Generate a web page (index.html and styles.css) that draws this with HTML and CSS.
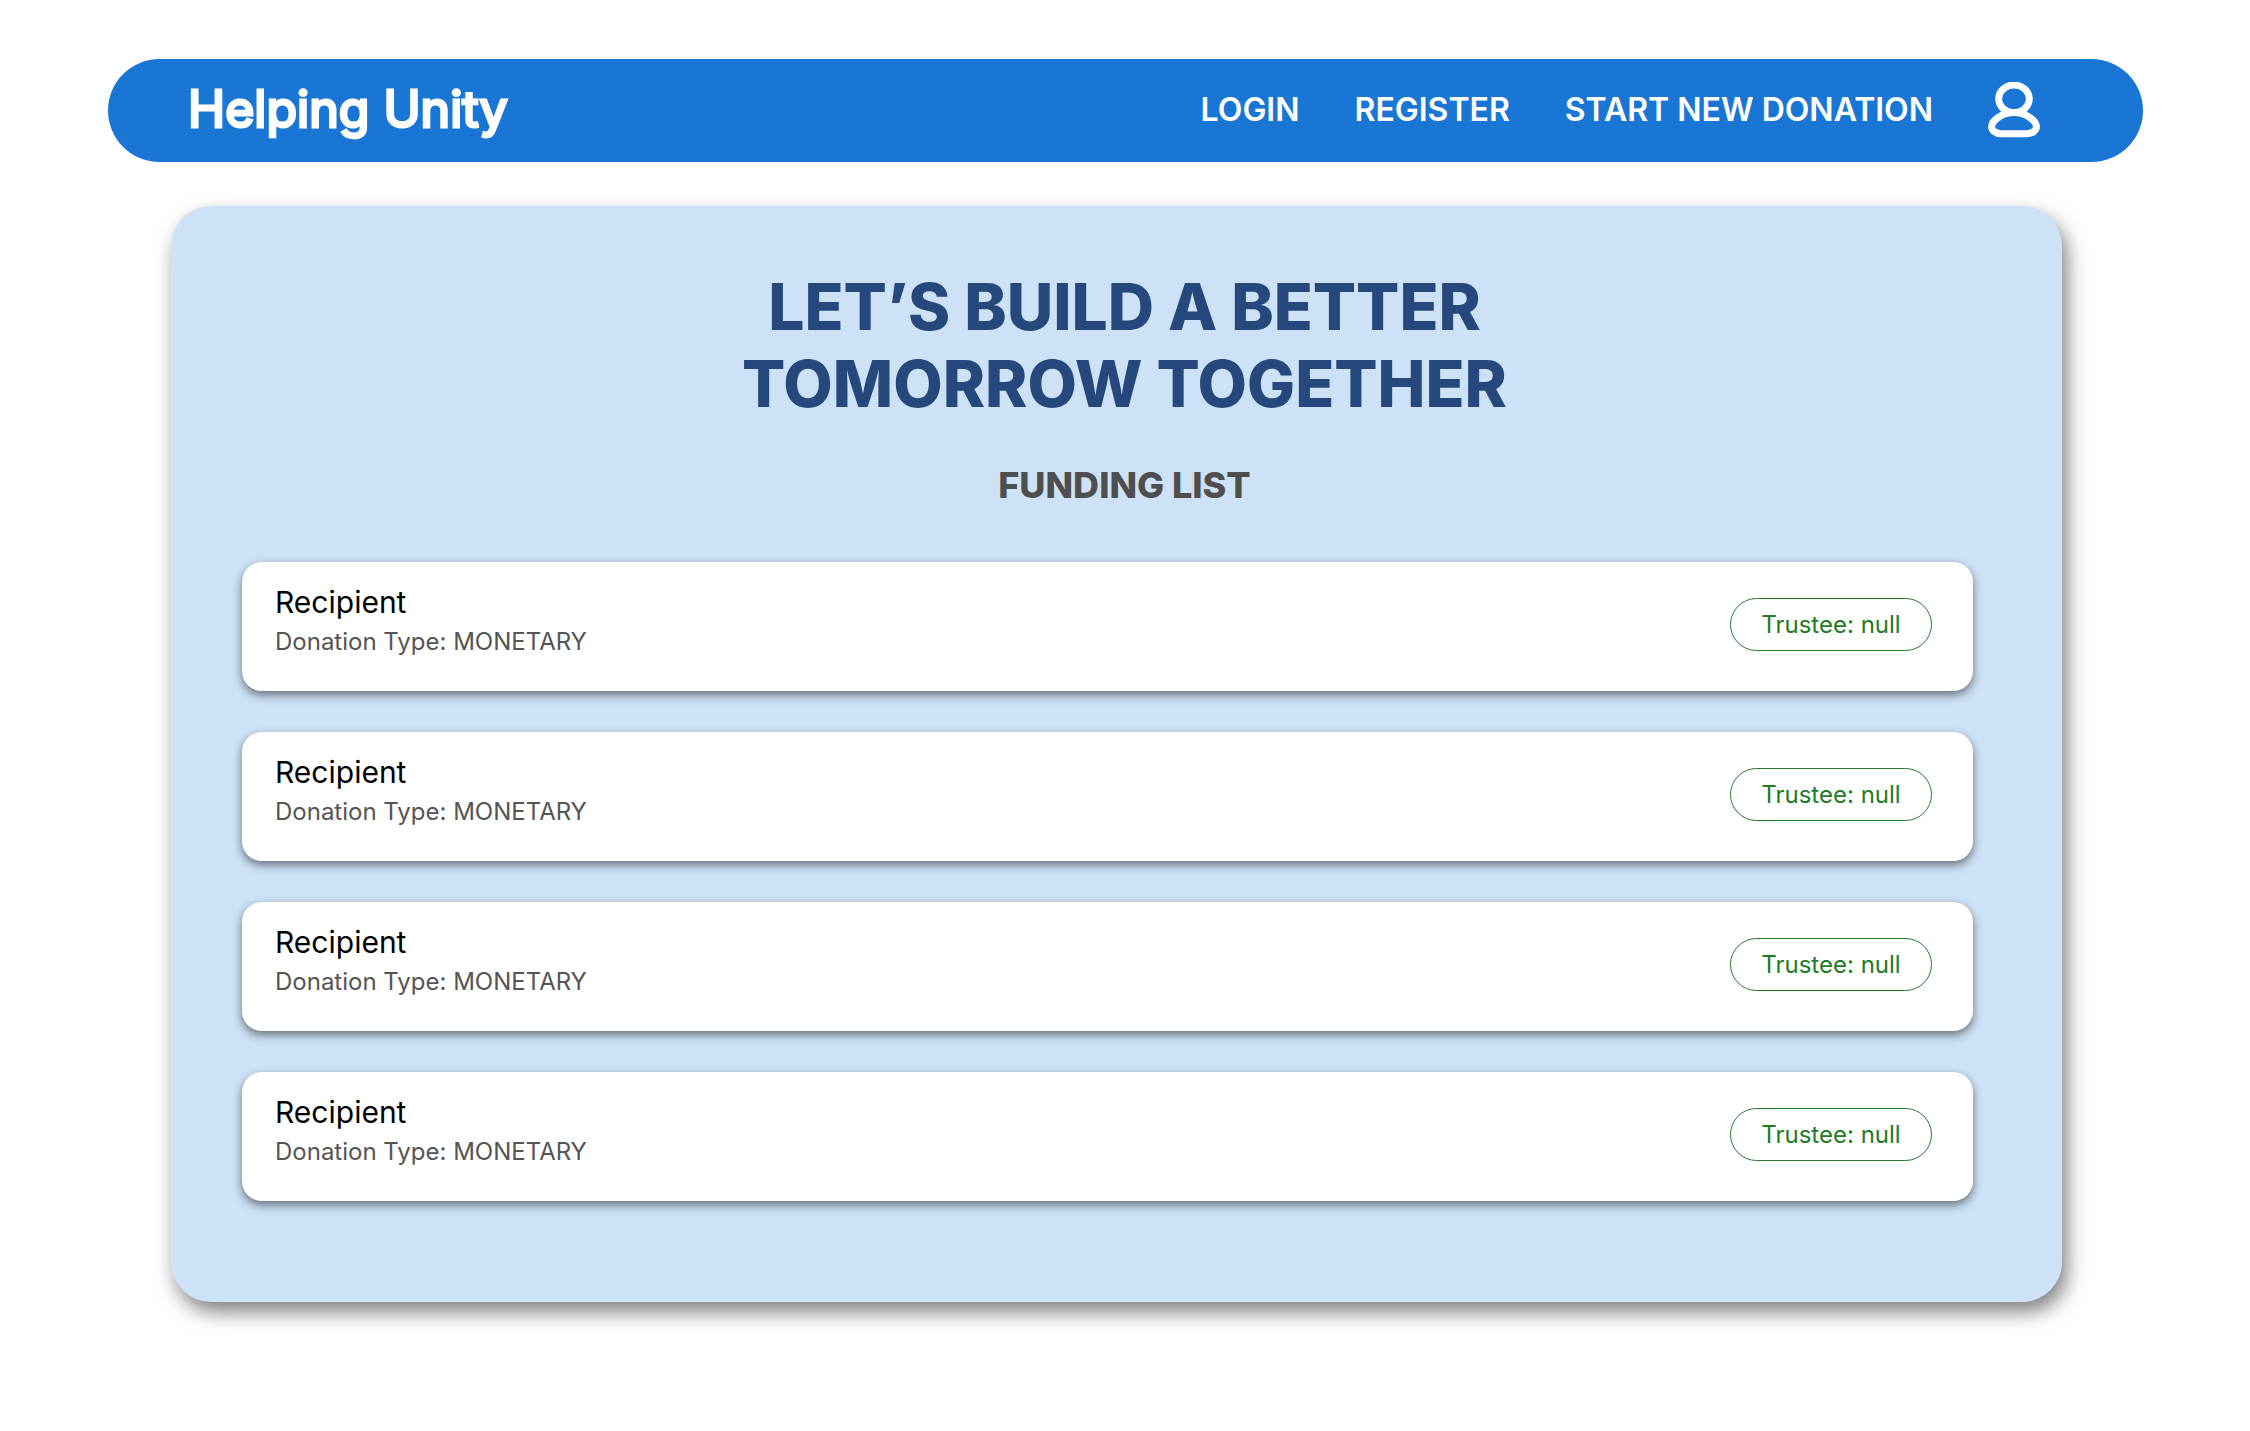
FILE: index.html
```html
<!DOCTYPE html>
<html lang="en">
<head>
  <meta charset="utf-8">
  <meta name="viewport" content="width=device-width, initial-scale=1">
  <title>Helping Unity</title>
  <link rel="stylesheet" href="styles.css">
</head>
<body>
  <header class="site-header">
    <a class="brand" href="#">Helping Unity</a>
    <nav class="site-nav">
      <a class="nav-link" href="#">LOGIN</a>
      <a class="nav-link" href="#">REGISTER</a>
      <a class="nav-link" href="#">START NEW DONATION</a>
      <button class="profile" type="button" aria-label="Profile">
        <svg class="profile-icon" viewBox="0 0 52 56" fill="none" stroke="currentColor" stroke-width="7" aria-hidden="true">
          <ellipse cx="26" cy="16.8" rx="15.3" ry="13.8"/>
          <path d="M26 30.5C14.5 30.5 3.6 38.5 3.6 44.7C3.6 48.3 7.6 51.8 13.5 51.8H38.5C44.4 51.8 48.4 48.3 48.4 44.7C48.4 38.5 37.5 30.5 26 30.5Z"/>
        </svg>
      </button>
    </nav>
  </header>

  <main class="panel">
    <h1 class="title">LET’S BUILD A BETTER<br>TOMORROW TOGETHER</h1>
    <h2 class="subtitle">FUNDING LIST</h2>
    <ul class="fund-list">
      <li class="fund">
        <div class="fund-text">
          <h3 class="fund-name">Recipient</h3>
          <p class="fund-type">Donation Type: MONETARY</p>
        </div>
        <button class="trustee" type="button">Trustee: null</button>
      </li>
      <li class="fund">
        <div class="fund-text">
          <h3 class="fund-name">Recipient</h3>
          <p class="fund-type">Donation Type: MONETARY</p>
        </div>
        <button class="trustee" type="button">Trustee: null</button>
      </li>
      <li class="fund">
        <div class="fund-text">
          <h3 class="fund-name">Recipient</h3>
          <p class="fund-type">Donation Type: MONETARY</p>
        </div>
        <button class="trustee" type="button">Trustee: null</button>
      </li>
      <li class="fund">
        <div class="fund-text">
          <h3 class="fund-name">Recipient</h3>
          <p class="fund-type">Donation Type: MONETARY</p>
        </div>
        <button class="trustee" type="button">Trustee: null</button>
      </li>
    </ul>
  </main>
</body>
</html>
```

FILE: styles.css
```css
* {
  box-sizing: border-box;
}

body {
  margin: 0;
  padding: 59px 107px 129px 108px;
  background: #fff;
  font-family: Inter, "Liberation Sans", sans-serif;
}

h1, h2, h3, p, ul {
  margin: 0;
  padding: 0;
}

button {
  font: inherit;
  background: none;
  cursor: pointer;
}

.site-header {
  display: flex;
  align-items: center;
  justify-content: space-between;
  padding: 15px 103px 17px 80px;
  border-radius: 52px;
  background: #1976d4;
  color: #fff;
}

.brand {
  color: inherit;
  font-size: 50px;
  font-weight: 400;
  line-height: 71px;
  text-decoration: none;
  -webkit-text-stroke: 3px currentColor;
}

.site-nav {
  display: flex;
  align-items: center;
  gap: 55px;
}

.nav-link {
  color: inherit;
  font-size: 32px;
  font-weight: 600;
  line-height: 40px;
  text-decoration: none;
}

.profile {
  display: flex;
  padding: 0;
  border: 0;
  color: inherit;
}

.profile-icon {
  width: 52px;
  height: 56px;
}

.panel {
  margin: 44px 81px 0 63px;
  padding: 62px 89px 101px 71px;
  border-radius: 40px;
  background: #cde2f6;
  box-shadow: 5px 10px 20px rgba(0, 0, 0, 0.5);
}

.title,
.subtitle {
  padding-left: 34px;
  font-weight: 800;
  text-align: center;
}

.title {
  color: #26487c;
  font-size: 64px;
  line-height: 77px;
}

.subtitle {
  margin-top: 39px;
  color: #4f4f4f;
  font-size: 36px;
  line-height: 48px;
}

.fund-list {
  display: grid;
  gap: 41px;
  margin-top: 53px;
  list-style: none;
}

.fund {
  display: flex;
  align-items: center;
  justify-content: space-between;
  padding: 22px 41px 27px 33px;
  border-radius: 20px;
  background: #fff;
  box-shadow: 0 4px 10px rgba(0, 0, 0, 0.5);
}

.fund-name {
  color: #000;
  font-size: 30px;
  font-weight: 400;
  line-height: 36px;
}

.fund-type {
  color: #555;
  font-size: 24px;
  line-height: 44px;
}

.trustee {
  min-width: 202px;
  padding: 0 24px;
  border: 1px solid #237b28;
  border-radius: 27px;
  color: #237b28;
  font-size: 24px;
  line-height: 51px;
}
```
